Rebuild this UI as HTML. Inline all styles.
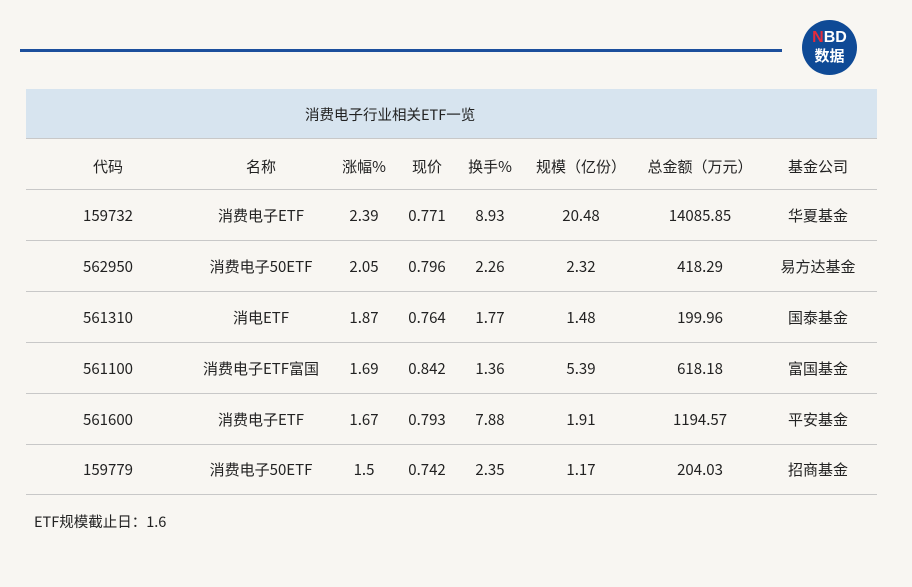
<!DOCTYPE html><html><head><meta charset="utf-8"><style>
body{margin:0;width:912px;height:587px;background:#f8f6f2;font-family:"Noto Sans CJK SC",sans-serif;color:#222;position:relative;overflow:hidden}
.line{position:absolute;left:20px;top:49px;width:762px;height:3px;background:#1c4f9c}
.logo{position:absolute;left:802px;top:20px;width:55px;height:55px;border-radius:50%;background:#0f4a96;color:#fff;text-align:center;font-weight:bold;font-family:"Liberation Sans","Noto Sans CJK SC",sans-serif;line-height:18px}
.band{position:absolute;left:26px;top:89px;width:851px;height:49px;background:#d7e4ef;border-bottom:1px solid #c8c8c8}
.band span{position:absolute;left:279px;top:16px;font-size:14.5px;line-height:20px}
.row{position:absolute;left:26px;width:851px;height:50px;border-bottom:1px solid #c8c8c8;font-size:15px}
.row div{position:absolute;top:16px;line-height:20px;transform:translateX(-50%);white-space:nowrap}
.foot{position:absolute;left:34px;top:512px;font-size:14.5px;line-height:20px}
</style></head><body>
<div class="line"></div>
<div class="logo"><div style="font-size:16px;margin-top:9px"><span style="color:#e32b3b">N</span>BD</div><div style="font-size:15px;margin-top:1px">数据</div></div>
<div class="band"><span>消费电子行业相关ETF一览</span></div>
<div class="row" style="top:139px"><div style="left:82px;top:18px">代码</div><div style="left:235px;top:18px">名称</div><div style="left:338px;top:18px">涨幅%</div><div style="left:401px;top:18px">现价</div><div style="left:464px;top:18px">换手%</div><div style="left:555px;top:18px">规模（亿份）</div><div style="left:674px;top:18px">总金额（万元）</div><div style="left:792px;top:18px">基金公司</div></div>
<div class="row" style="top:190px"><div style="left:82px">159732</div><div style="left:235px">消费电子ETF</div><div style="left:338px">2.39</div><div style="left:401px">0.771</div><div style="left:464px">8.93</div><div style="left:555px">20.48</div><div style="left:674px">14085.85</div><div style="left:792px">华夏基金</div></div>
<div class="row" style="top:241px"><div style="left:82px">562950</div><div style="left:235px">消费电子50ETF</div><div style="left:338px">2.05</div><div style="left:401px">0.796</div><div style="left:464px">2.26</div><div style="left:555px">2.32</div><div style="left:674px">418.29</div><div style="left:792px">易方达基金</div></div>
<div class="row" style="top:292px"><div style="left:82px">561310</div><div style="left:235px">消电ETF</div><div style="left:338px">1.87</div><div style="left:401px">0.764</div><div style="left:464px">1.77</div><div style="left:555px">1.48</div><div style="left:674px">199.96</div><div style="left:792px">国泰基金</div></div>
<div class="row" style="top:343px"><div style="left:82px">561100</div><div style="left:235px">消费电子ETF富国</div><div style="left:338px">1.69</div><div style="left:401px">0.842</div><div style="left:464px">1.36</div><div style="left:555px">5.39</div><div style="left:674px">618.18</div><div style="left:792px">富国基金</div></div>
<div class="row" style="top:394px"><div style="left:82px">561600</div><div style="left:235px">消费电子ETF</div><div style="left:338px">1.67</div><div style="left:401px">0.793</div><div style="left:464px">7.88</div><div style="left:555px">1.91</div><div style="left:674px">1194.57</div><div style="left:792px">平安基金</div></div>
<div class="row" style="top:444px"><div style="left:82px">159779</div><div style="left:235px">消费电子50ETF</div><div style="left:338px">1.5</div><div style="left:401px">0.742</div><div style="left:464px">2.35</div><div style="left:555px">1.17</div><div style="left:674px">204.03</div><div style="left:792px">招商基金</div></div>
<div class="foot">ETF规模截止日：1.6</div>
</body></html>
